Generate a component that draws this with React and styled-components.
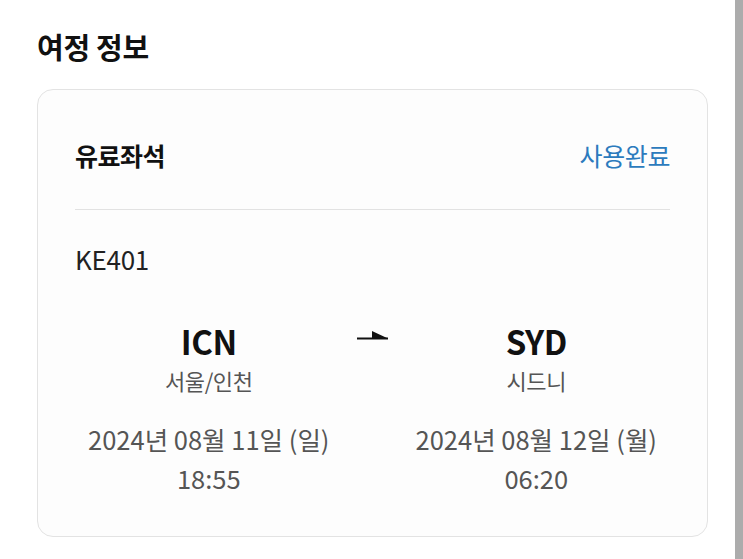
import React from "react";
import styled, { createGlobalStyle } from "styled-components";

const GlobalStyle = createGlobalStyle`
  body {
    margin: 0;
    background: #ffffff;
    font-family: "Noto Sans CJK KR", "Noto Sans", sans-serif;
  }
`;

const Screen = styled.div`
  display: flex;
  min-height: 100vh;
`;

const Main = styled.div`
  flex: 1;
  padding: 27px 27px 0 37px;
`;

const ScrollTrack = styled.div`
  width: 8px;
  background: #acacac;
`;

const PageTitle = styled.h1`
  margin: 0;
  font-size: 29px;
  line-height: 38px;
  font-weight: 700;
  color: #111;
  letter-spacing: -0.3px;
`;

const Card = styled.section`
  margin-top: 24px;
  border: 1.5px solid #e3e3e3;
  border-radius: 16px;
  background: #fdfdfd;
  padding: 0 37px 41px;
`;

const CardHeader = styled.div`
  display: flex;
  justify-content: space-between;
  align-items: center;
  padding: 49px 0 38px;
  border-bottom: 1.5px solid #e2e2e2;
`;

const SeatType = styled.span`
  font-size: 25px;
  line-height: 32px;
  font-weight: 700;
  color: #111;
  letter-spacing: -0.5px;
`;

const Status = styled.span`
  font-size: 25px;
  line-height: 32px;
  color: #2c7bbd;
  letter-spacing: -0.4px;
`;

const FlightNo = styled.div`
  margin-top: 31px;
  font-size: 26px;
  line-height: 36px;
  color: #222;
  letter-spacing: -0.3px;
`;

const Route = styled.div`
  display: grid;
  grid-template-columns: 1fr 60px 1fr;
  margin-top: 44px;
`;

const Stop = styled.div`
  display: flex;
  flex-direction: column;
  align-items: center;
  text-align: center;
`;

const Code = styled.div`
  font-size: 33px;
  line-height: 40px;
  font-weight: 700;
  color: #111;
  letter-spacing: -0.5px;
`;

const City = styled.div`
  margin-top: 5px;
  font-size: 22px;
  line-height: 28px;
  color: #555;
  letter-spacing: -0.4px;
`;

const DateText = styled.div`
  margin-top: ${(p) => p.gap}px;
  font-size: 25.5px;
  line-height: 34px;
  color: #555;
  letter-spacing: 0;
`;

const ArrowCell = styled.div`
  display: flex;
  justify-content: center;
  padding-top: 8px;
`;

const Arrow = () => (
  <svg width="31" height="12" viewBox="0 0 31 12">
    <line x1="0" y1="9.5" x2="31" y2="9.5" stroke="#111" strokeWidth="2" />
    <polygon points="15,2 31,9.5 15,9.5" fill="#111" />
  </svg>
);

const stops = [
  { code: "ICN", city: "서울/인천", date: "2024년 08월 11일 (일)", time: "18:55" },
  { code: "SYD", city: "시드니", date: "2024년 08월 12일 (월)", time: "06:20" },
];

const StopBlock = ({ stop }) => (
  <Stop>
    <Code>{stop.code}</Code>
    <City>{stop.city}</City>
    <DateText gap={28}>{stop.date}</DateText>
    <DateText gap={5}>{stop.time}</DateText>
  </Stop>
);

export default function App() {
  return (
    <Screen>
      <GlobalStyle />
      <Main>
        <PageTitle>여정 정보</PageTitle>
        <Card>
          <CardHeader>
            <SeatType>유료좌석</SeatType>
            <Status>사용완료</Status>
          </CardHeader>
          <FlightNo>KE401</FlightNo>
          <Route>
            <StopBlock stop={stops[0]} />
            <ArrowCell>
              <Arrow />
            </ArrowCell>
            <StopBlock stop={stops[1]} />
          </Route>
        </Card>
      </Main>
      <ScrollTrack />
    </Screen>
  );
}
